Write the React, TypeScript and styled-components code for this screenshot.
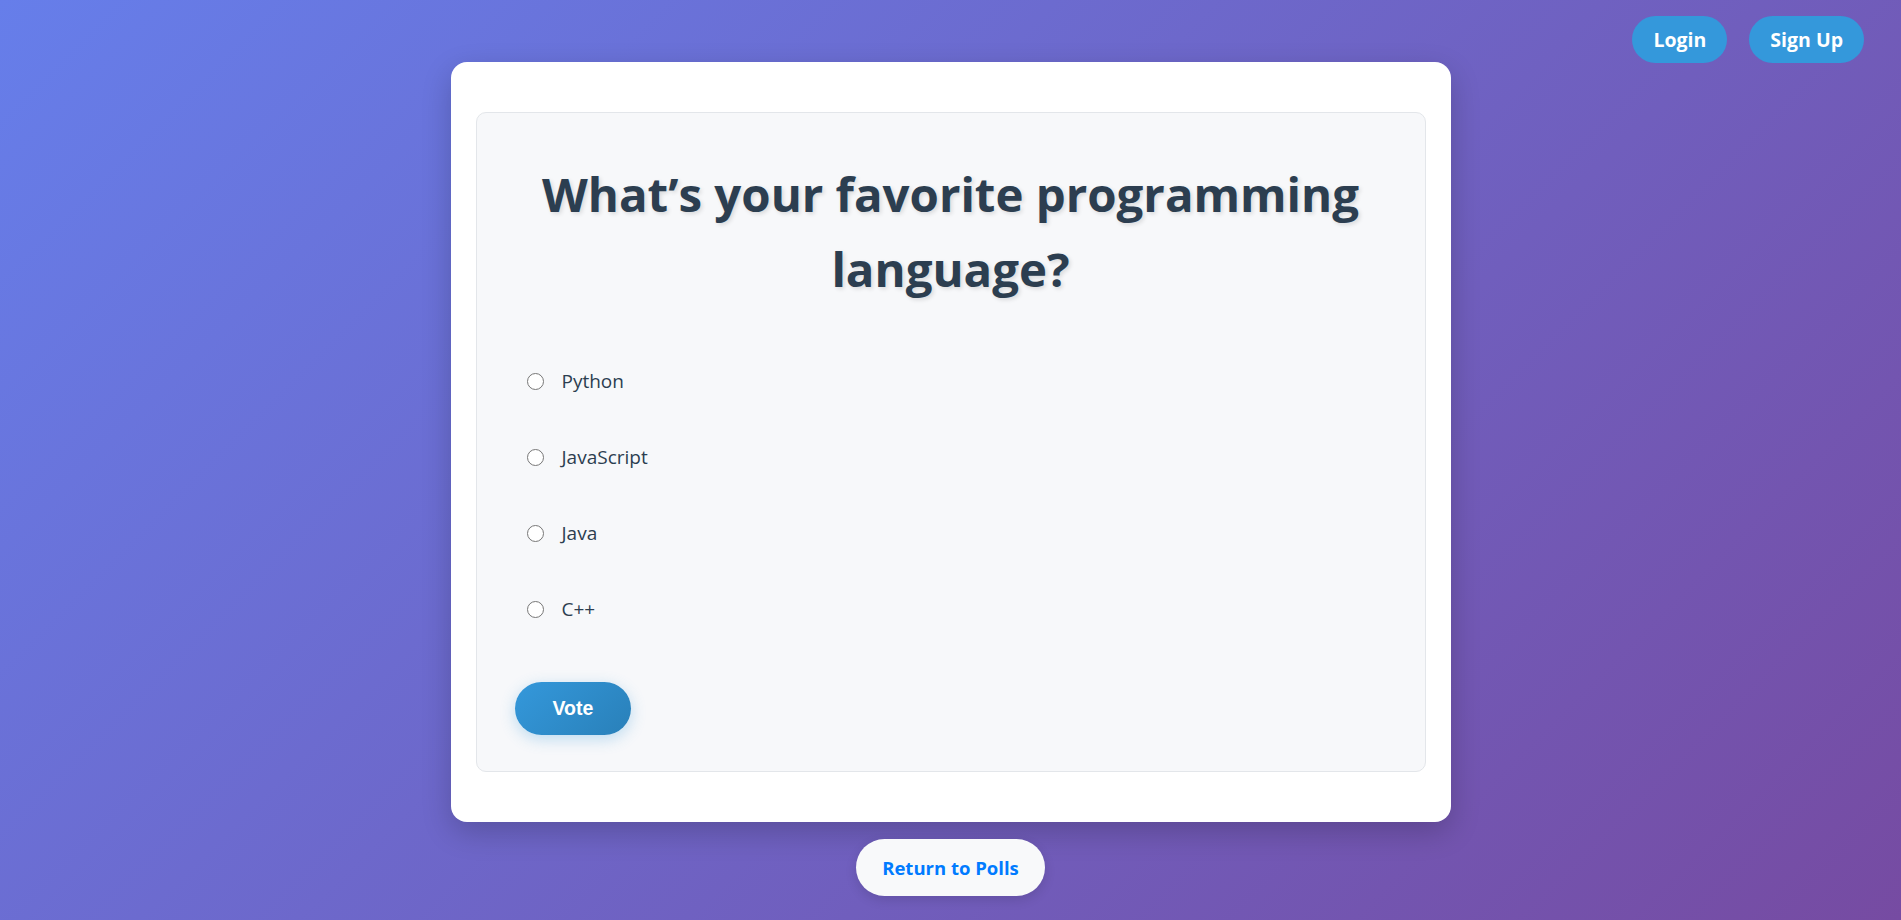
import React, { useState } from 'react';
import styled, { createGlobalStyle } from 'styled-components';

const GlobalStyle = createGlobalStyle`
  * { box-sizing: border-box; }
  html, body { margin: 0; padding: 0; }
  body {
    font-family: "Open Sans", "Noto Sans", sans-serif;
    background: linear-gradient(135deg, #667eea 0%, #764ba2 100%);
    min-height: 100vh;
  }
`;

const options = ['Python', 'JavaScript', 'Java', 'C++'];

const App = () => {
  const [choice, setChoice] = useState<string | null>(null);

  return (
    <Page>
      <GlobalStyle />
      <NavBar>
        <NavButton>Login</NavButton>
        <NavButton>Sign Up</NavButton>
      </NavBar>
      <Card>
        <PollPanel>
          <Question>What’s your favorite programming language?</Question>
          <OptionList>
            {options.map((opt) => (
              <OptionRow key={opt}>
                <Radio
                  type="radio"
                  name="poll"
                  checked={choice === opt}
                  onChange={() => setChoice(opt)}
                />
                <span>{opt}</span>
              </OptionRow>
            ))}
          </OptionList>
          <VoteButton>Vote</VoteButton>
        </PollPanel>
      </Card>
      <ReturnButton>Return to Polls</ReturnButton>
    </Page>
  );
};

const Page = styled.div`
  min-height: 100vh;
  display: flex;
  flex-direction: column;
  align-items: center;
  padding-top: 62px;
`;

// fixed top-right nav, floats over the page
const NavBar = styled.nav`
  position: absolute;
  top: 16px;
  right: 37px;
  display: flex;
  gap: 22px;
`;

const NavButton = styled.a`
  display: flex;
  align-items: center;
  height: 47px;
  padding: 0 21px;
  border-radius: 25px;
  background: #3498db;
  color: #fff;
  font-weight: 700;
  font-size: 19.5px;
  cursor: pointer;
`;

const Card = styled.div`
  width: 1000px;
  background: #fff;
  border-radius: 16px;
  padding: 50px 25px;
  box-shadow: 0 10px 30px rgba(0, 0, 0, 0.2);
`;

const PollPanel = styled.div`
  background: #f7f8fa;
  border: 1px solid #e3e6ea;
  border-radius: 10px;
  padding: 37px 38px 36px;
`;

const Question = styled.h1`
  margin: 6px 0 37px;
  text-align: center;
  color: #2c3e50;
  font-size: 47.4px;
  font-weight: 700;
  line-height: 75px;
  text-shadow: 2px 2px 4px rgba(0, 0, 0, 0.12);
`;

const OptionList = styled.div`
  display: flex;
  flex-direction: column;
`;

const OptionRow = styled.label`
  display: flex;
  align-items: center;
  gap: 18px;
  padding: 26px 12px;
  line-height: 24px;
  font-size: 19px;
  color: #2c3e50;
  cursor: pointer;
`;

const Radio = styled.input`
  width: 17px;
  height: 17px;
  margin: 0;
`;

const VoteButton = styled.button`
  margin-top: 35px;
  height: 53px;
  padding: 0 38px;
  border: none;
  border-radius: 30px;
  background: linear-gradient(135deg, #3498db, #2980b9);
  color: #fff;
  font-family: "Liberation Sans", Arial, sans-serif;
  font-size: 19.5px;
  font-weight: 700;
  box-shadow: 0 4px 15px rgba(52, 152, 219, 0.3);
  cursor: pointer;
`;

const ReturnButton = styled.a`
  margin-top: 17px;
  display: flex;
  align-items: center;
  height: 57px;
  padding: 0 26px;
  border-radius: 30px;
  background: #f8f9fa;
  color: #007bff;
  font-size: 18.5px;
  font-weight: 700;
  box-shadow: 0 4px 12px rgba(0, 0, 0, 0.12);
  cursor: pointer;
`;

export default App;
